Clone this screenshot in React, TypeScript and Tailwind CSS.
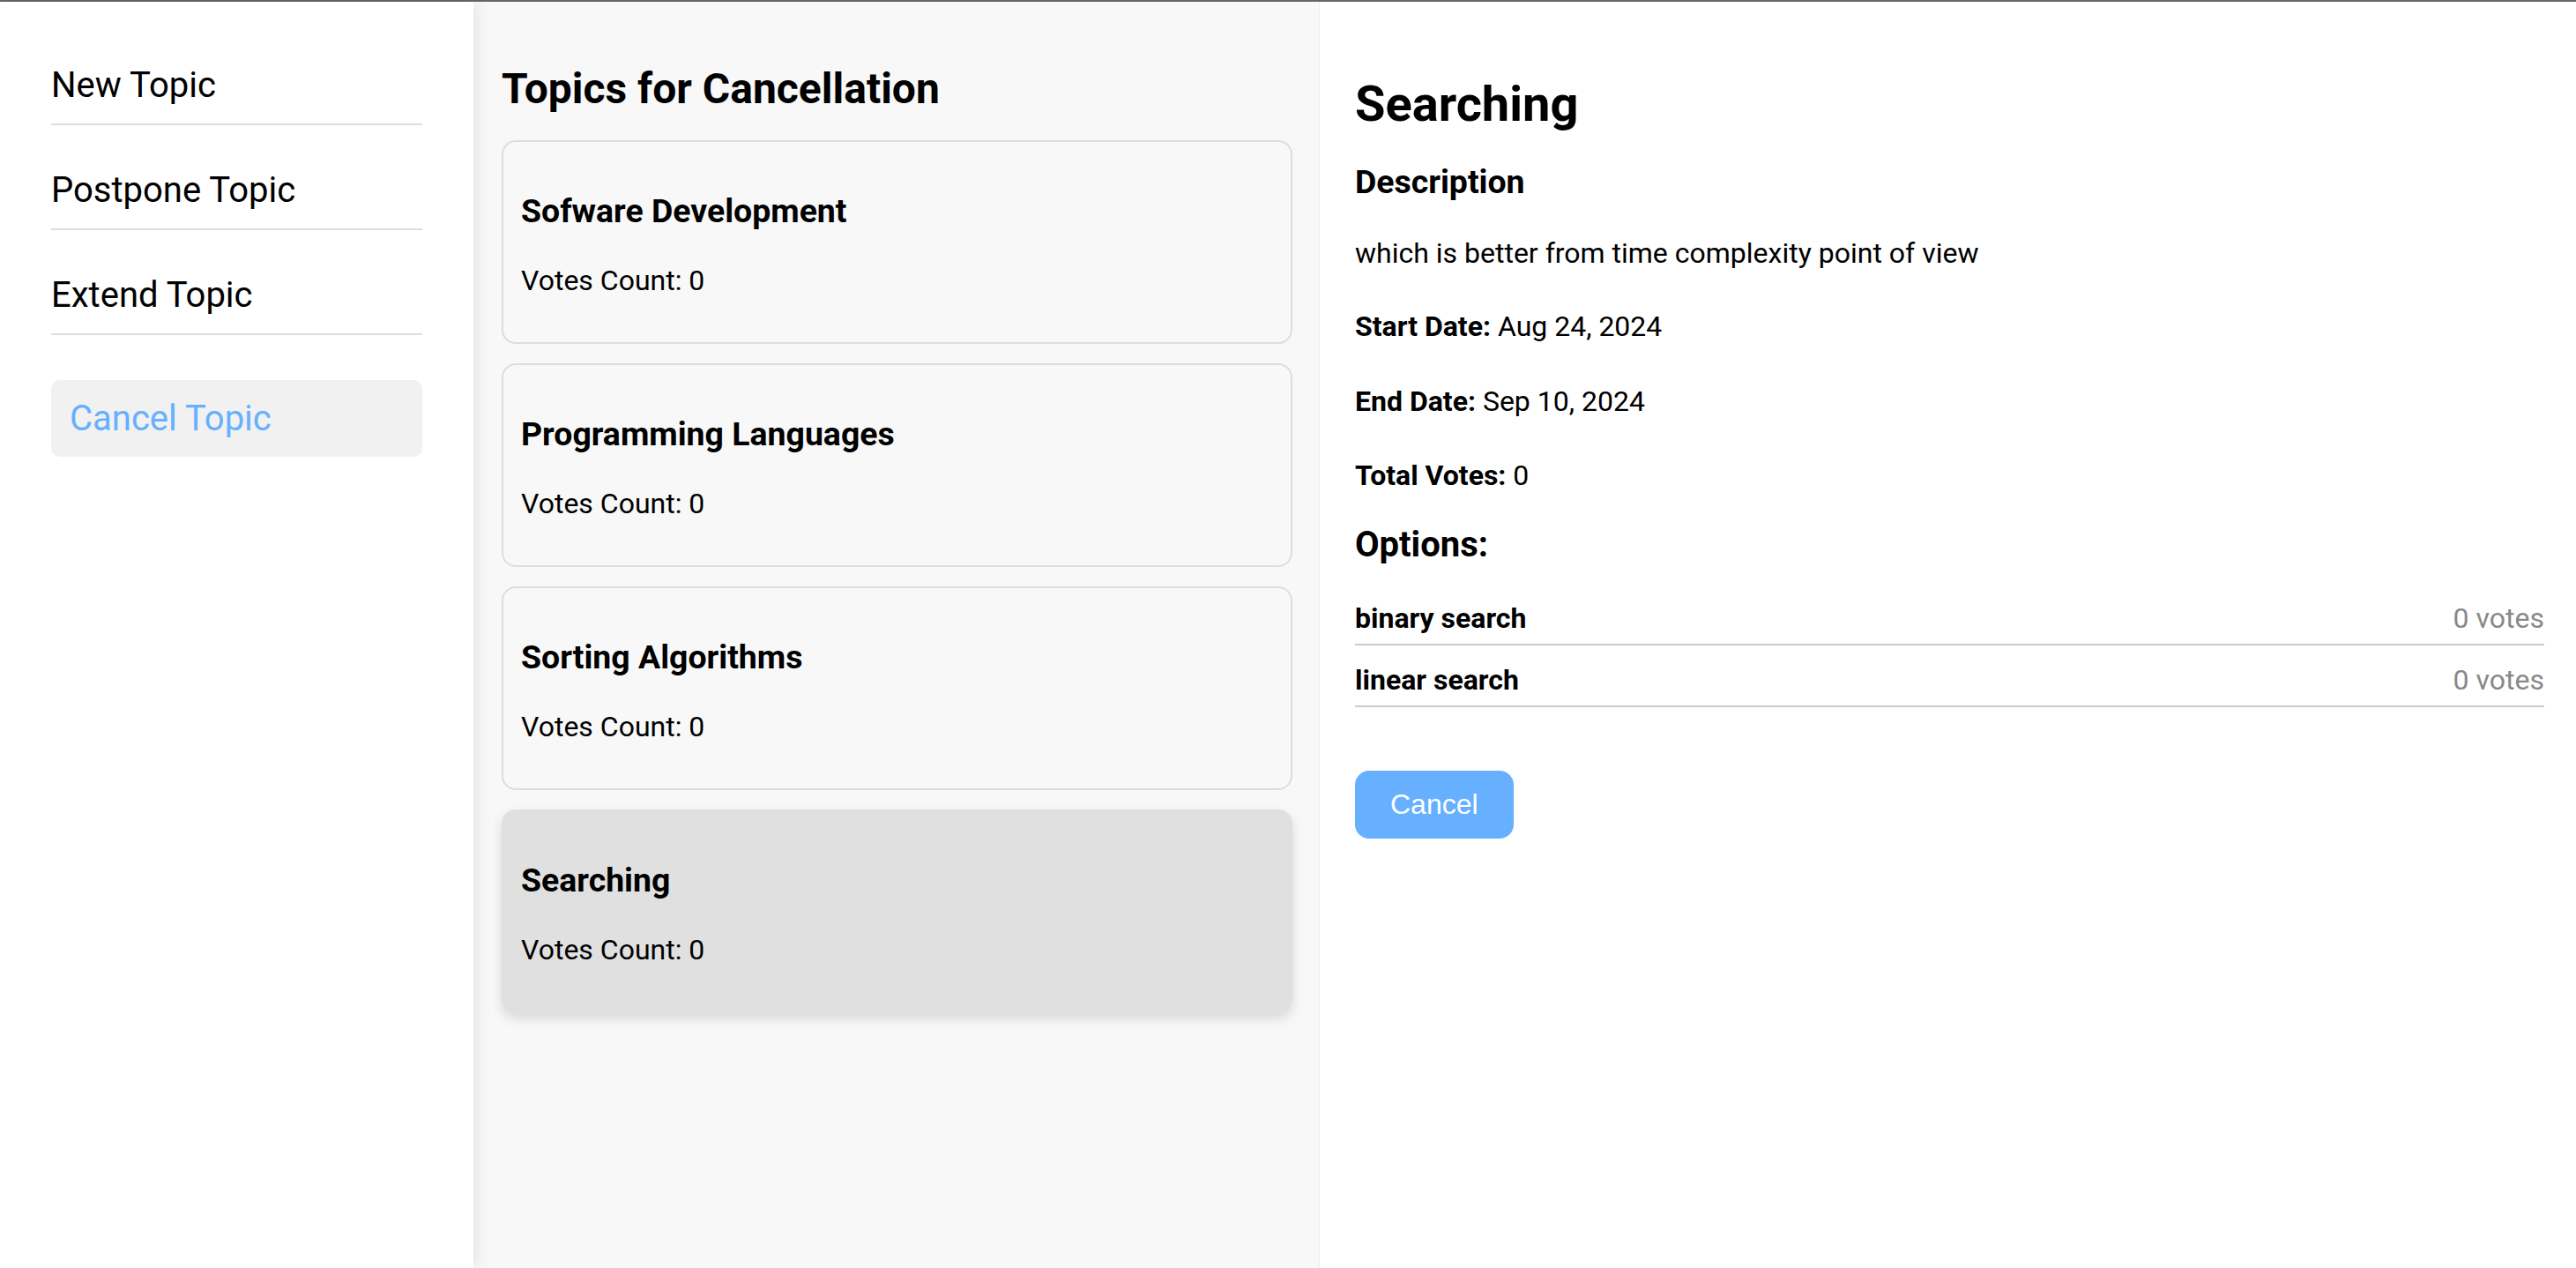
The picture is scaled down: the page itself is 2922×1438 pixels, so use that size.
import React from 'react'

const menu = ['New Topic', 'Postpone Topic', 'Extend Topic']

const topics = [
  { id: 1, title: 'Sofware Development', votes: 0 },
  { id: 2, title: 'Programming Languages', votes: 0 },
  { id: 3, title: 'Sorting Algorithms', votes: 0 },
  { id: 4, title: 'Searching', votes: 0 },
]

const options = [
  { name: 'binary search', votes: 0 },
  { name: 'linear search', votes: 0 },
]

export default function App() {
  const selected = 4

  return (
    <div className="flex h-screen flex-col bg-white text-black leading-[normal] font-['Roboto','Liberation_Sans',sans-serif]">
      <div className="h-[2px] w-full bg-[#666666]" />
      <div className="flex min-h-0 flex-1">
        {/* sidebar */}
        <aside className="relative z-10 w-[537px] shrink-0 bg-white px-[58px] pt-[51px] shadow-[3px_0_18px_rgba(0,0,0,0.09)]">
          {menu.map((item) => (
            <div key={item} className="mb-[30px] border-b-2 border-[#dddddd] py-[20px] text-[40px]">
              {item}
            </div>
          ))}
          <div className="mt-[51px] rounded-[10px] bg-[#f1f1f1] px-[21px] py-[20px] text-[40px] text-[#66b0ff]">
            Cancel Topic
          </div>
        </aside>

        {/* topic list */}
        <main className="w-[960px] shrink-0 border-r border-[#ededed] bg-[#f8f8f8] pl-[32px] pr-[30px] pt-[70px]">
          <h2 className="mb-[30px] text-[48px] font-bold">Topics for Cancellation</h2>
          <div className="flex flex-col gap-[22px]">
            {topics.map((t) =>
              t.id === selected ? (
                <div
                  key={t.id}
                  className="rounded-[16px] border-2 border-[#e0e0e0] bg-[#e0e0e0] p-[20px] shadow-[0_6px_14px_rgba(0,0,0,0.13)]"
                >
                  <h3 className="mb-[38px] mt-[36px] text-[37.44px] font-bold">{t.title}</h3>
                  <p className="mb-[31px] text-[32px]">Votes Count: {t.votes}</p>
                </div>
              ) : (
                <div key={t.id} className="rounded-[16px] border-2 border-[#dddddd] bg-[#f8f8f8] p-[20px]">
                  <h3 className="mb-[38px] mt-[36px] text-[37.44px] font-bold">{t.title}</h3>
                  <p className="mb-[31px] text-[32px]">Votes Count: {t.votes}</p>
                </div>
              )
            )}
          </div>
        </main>

        {/* details */}
        <section className="min-w-0 flex-1 bg-white pl-[40px] pr-[36px] pt-[83px]">
          <h1 className="text-[56px] font-bold">Searching</h1>
          <h3 className="mt-[33px] text-[37.44px] font-bold">Description</h3>
          <p className="mt-[40px] text-[32px]">which is better from time complexity point of view</p>
          <p className="mt-[45px] text-[32px]">
            <span className="font-bold">Start Date:</span> Aug 24, 2024
          </p>
          <p className="mt-[47px] text-[32px]">
            <span className="font-bold">End Date:</span> Sep 10, 2024
          </p>
          <p className="mt-[46px] text-[32px]">
            <span className="font-bold">Total Votes:</span> 0
          </p>
          <h3 className="mt-[36px] text-[40px] font-bold">Options:</h3>
          <ul className="mt-[21px]">
            {options.map((o) => (
              <li key={o.name} className="flex items-baseline justify-between border-b-2 border-[#cccccc] pb-[10px] pt-[20px] text-[32px]">
                <span className="font-bold">{o.name}</span>
                <span className="text-[#888888]">{o.votes} votes</span>
              </li>
            ))}
          </ul>
          <button className="mt-[72px] rounded-[16px] bg-[#66b0ff] px-[40px] py-[20px] text-[32px] text-white font-['Liberation_Sans',Arial,sans-serif]">
            Cancel
          </button>
        </section>
      </div>
    </div>
  )
}
